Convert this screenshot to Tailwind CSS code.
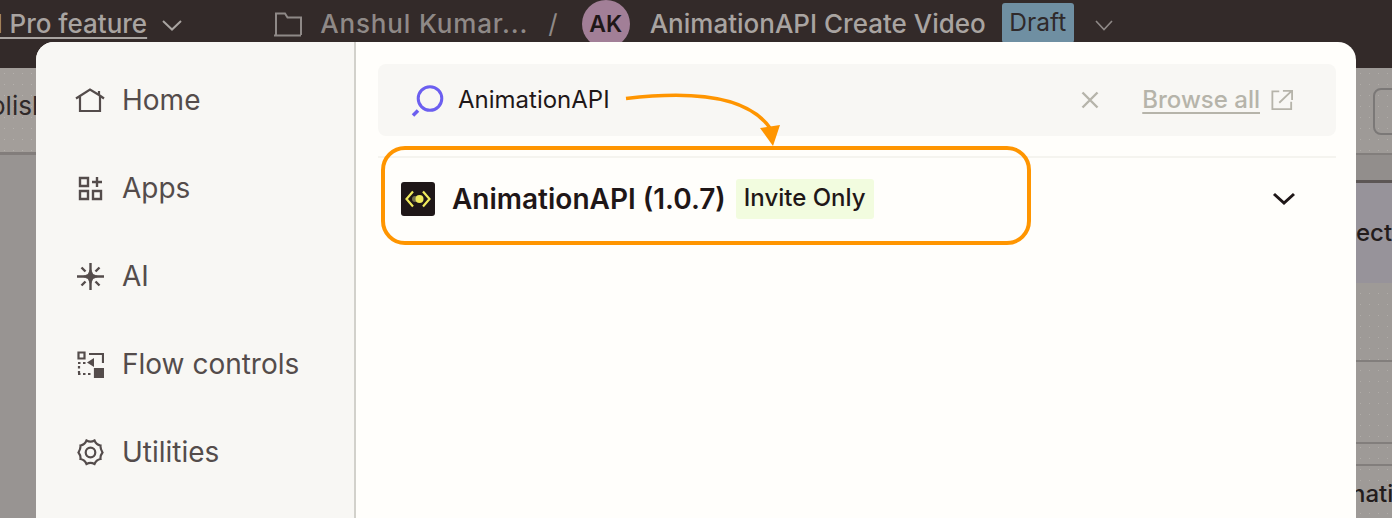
<!DOCTYPE html>
<html><head><meta charset="utf-8">
<script src="https://cdn.jsdelivr.net/npm/@tailwindcss/browser@4"></script>
</head>
<body class="m-0 overflow-hidden">
<div class="relative w-[1392px] h-[518px] overflow-hidden font-['Inter',sans-serif] bg-[#9d9996]">
  <!-- top bar -->
  <header class="h-[68px] bg-[#332a29] flex items-start text-[26px] leading-[48px] font-medium text-[#8f8987] whitespace-nowrap">
    <span class="ml-[-4px] text-[#a9a4a1] underline decoration-2 underline-offset-[4px]">l Pro feature</span>
    <svg class="ml-[14px] mt-[19px]" width="22" height="13" viewBox="0 0 22 13" fill="none" stroke="#a9a4a1" stroke-width="2"><path d="M2 2l9 8.500 9-8.500"/></svg>
    <svg class="ml-[91px] mt-[12px]" width="28" height="25" viewBox="0 0 28 25" fill="none" stroke="#8f8987" stroke-width="2"><path d="M2 24V1.500h9l2.500 4H27V23M0 23.500h27"/></svg>
    <span class="ml-[18px] tracking-[0.85px]">Anshul Kumar...</span>
    <span class="ml-[20px] font-normal">/</span>
    <span class="ml-[24px] w-[48px] h-[48px] rounded-full bg-[#a27f97] text-[#1f1718] text-[23px] font-semibold text-center">AK</span>
    <span class="ml-[20px] text-[#a9a4a1]">AnimationAPI Create Video</span>
    <span class="ml-[16px] mt-[3px] h-[40px] w-[72px] text-center bg-[#6f8fa2] rounded-[3px] text-[#2f2a2b] text-[24.500px] leading-[38px] font-normal">Draft</span>
    <svg class="ml-[20px] mt-[19px]" width="20" height="13" viewBox="0 0 20 13" fill="none" stroke="#8f8987" stroke-width="1.6"><path d="M2 2l8 8.500 8-8.500"/></svg>
  </header>

  <!-- dimmed canvas -->
  <div class="absolute left-0 top-[68px] w-[36px] h-[450px] bg-[#989492] bg-[radial-gradient(#7f7b7a_0.7px,transparent_0.7px)] bg-[length:22px_22px]">
    <div class="h-[87px] bg-[#a39e9a] bg-[radial-gradient(#b5b1ad_0.7px,transparent_0.7px)] bg-[length:9px_11px] border-b-[3px] border-[#827d7b] text-[26px] text-[#2f2929] leading-[76px] overflow-hidden"><span class="ml-[-10px]">olish</span></div>
  </div>
  <div class="absolute left-[1356px] top-[68px] w-[36px] h-[450px] bg-[#9e9a97] bg-[radial-gradient(#b0aca8_0.7px,transparent_0.7px)] bg-[length:9px_11px] text-[24px] text-[#231c1c] font-medium overflow-hidden">
    <div class="h-[87px] border-b-[2px] border-[#827e7c] pt-[20px] pl-[17px]"><div class="w-[40px] h-[47px] border-2 border-[#7b7877] rounded-[8px]"></div></div>
    <div class="h-[28px] bg-[#928e8c] border-b-[3px] border-[#5c5655]"></div>
    <div class="h-[100px] bg-[#97939a] pt-[32px] leading-[36px] whitespace-nowrap"><span>ect</span></div>
    <div class="h-[79px] border-b-[2px] border-[#827e7c]"></div>
    <div class="h-[82px] border-b-[2px] border-[#827e7c]"></div>
    <div class="h-[22px] border-b-[2px] border-[#827e7c]"></div>
    <div class="pt-[10px] leading-[36px] whitespace-nowrap"><span class="ml-[-5px]">nati</span></div>
  </div>

  <!-- modal -->
  <div class="absolute left-[36px] top-[42px] w-[1320px] h-[476px] rounded-t-[18px] overflow-hidden bg-[#fffefb] flex">
    <aside class="w-[318px] h-full bg-[#f8f7f4] pt-[40px] pl-[39px] flex flex-col gap-[52px] text-[#544c4b] text-[28px] leading-[36px]">
      <div class="flex items-center h-[36px] gap-[17px]">
        <span class="w-[30px] flex justify-center"><svg width="30" height="24" viewBox="0 0 30 24" fill="none" stroke="#544c4b" stroke-width="2.200"><path d="M1 10.500L15 1.500l9 5.500M24 3v4.500M29 10.500L24 7M5 8v15h20V8"/></svg></span>
        <span>Home</span>
      </div>
      <div class="flex items-center h-[36px] gap-[17px]">
        <span class="w-[30px] flex justify-center"><svg width="25" height="25" viewBox="0 0 25 25" fill="none" stroke="#544c4b" stroke-width="2.400"><path d="M2 2h8v8H2zM2 15h8v8H2zM15 15h8v8h-8zM19 1v10M14 6h10"/></svg></span>
        <span>Apps</span>
      </div>
      <div class="flex items-center h-[36px] gap-[17px]">
        <span class="w-[30px] flex justify-center"><svg width="27" height="27" viewBox="0 0 27 27" fill="none" stroke="#544c4b" stroke-width="2.400"><path d="M13.500 0v8M13.500 19v8M0 13.500h8M19 13.500h8M4.500 4.500l4 4M18.500 18.500l4 4M22.500 4.500l-4 4M8.500 18.500l-4 4"/><path d="M13.500 5l2.600 5.900 5.900 2.600-5.900 2.600-2.600 5.900-2.600-5.900-5.900-2.600 5.900-2.600z" fill="#544c4b" stroke="none"/></svg></span>
        <span>AI</span>
      </div>
      <div class="flex items-center h-[36px] gap-[17px]">
        <span class="w-[30px] flex justify-center"><svg width="27" height="27" viewBox="0 0 27 27" fill="none" stroke="#544c4b" stroke-width="2.200"><path d="M1.500 1.500h6v6h-6z"/><path d="M12 3h14v9"/><path d="M10 11.500l7-4.500v9z" fill="#544c4b" stroke="none"/><path d="M1 12h8M2 15v7M1 23h15" stroke-dasharray="2.500 2.500"/><path d="M18 18h8v8h-8z" fill="#544c4b"/></svg></span>
        <span>Flow controls</span>
      </div>
      <div class="flex items-center h-[36px] gap-[17px]">
        <span class="w-[30px] flex justify-center"><svg width="27" height="27" viewBox="0 0 27 27" fill="none" stroke="#544c4b" stroke-width="2.200"><circle cx="13.500" cy="13.500" r="4.800"/><path d="M9.500 1.500c2.500 1.500 5.500 1.500 8 0 1 2.500 3 4.500 6 5 -.3 2.500.5 4.500 2 7 -1.500 2-2.300 4-2 6.500-3 .5-5 2.500-6 5-2.500-1.500-5.500-1.500-8 0-1-2.500-3-4.500-6-5 .3-2.500-.5-4.500-2-6.500 1.500-2.500 2.300-4.500 2-7 3-.5 5-2.500 6-5z"/></svg></span>
        <span>Utilities</span>
      </div>
    </aside>
    <div class="w-[2px] bg-[#d2d1cb]"></div>
    <main class="flex-1 relative pl-[22px] pr-[20px] pt-[22px]">
      <div class="h-[72px] w-[958px] rounded-[8px] bg-[#f8f7f4] flex items-center relative">
        <svg class="ml-[33px]" width="34" height="34" viewBox="0 0 34 34" fill="none"><circle cx="19" cy="15.500" r="11.800" stroke="#6c5ff0" stroke-width="3"/><path d="M2 32.500l5-5" stroke="#6c5ff0" stroke-width="3.500"/></svg>
        <span class="ml-[13px] text-[24px] text-[#1f1718] leading-[30px]">AnimationAPI</span>
        <div class="ml-auto flex items-center">
          <svg width="18" height="18" viewBox="0 0 18 18" fill="none" stroke="#b6b4aa" stroke-width="2.400"><path d="M1.500 1.500l15 15M16.500 1.500l-15 15"/></svg>
          <span class="ml-[43px] text-[24px] font-medium text-[#b6b4aa] underline decoration-2 underline-offset-[4px]">Browse all</span>
          <svg class="ml-[11px] mr-[43px]" width="22" height="22" viewBox="0 0 24 24" fill="none" stroke="#b6b4aa" stroke-width="2"><path d="M9 2.500H1.500V22H22v-8M9 15L22 2.500M13 2h10v10"/></svg>
        </div>
      </div>
      <div class="h-[2px] w-[958px] mt-[20px] bg-[#f5f4ef]"></div>
      <div class="flex items-center h-[82px] pl-[23px]">
        <div class="w-[34px] h-[34px] rounded-[3px] bg-[#1f1718] flex items-center justify-center">
          <svg width="26" height="18" viewBox="0 0 26 18" fill="none"><path d="M8 1.500L1.500 9 8 16.500M18 1.500L24.500 9 18 16.500" stroke="#f0ea5c" stroke-width="2.200"/><circle cx="10" cy="9" r="3" fill="#77734a"/><circle cx="14.500" cy="9" r="4" fill="#f0ea5c"/></svg>
        </div>
        <span class="ml-[17px] text-[28px] font-semibold text-[#1f1718] leading-[34px]">AnimationAPI (1.0.7)</span>
        <span class="ml-[10px] mb-[1px] h-[40px] px-[8px] rounded-[3px] bg-[#f2fcdf] text-[24px] font-medium text-[#1f1718] leading-[38px]">Invite Only</span>
        <svg class="absolute left-[916px]" width="24" height="14" viewBox="0 0 24 14" fill="none" stroke="#1f1718" stroke-width="3"><path d="M2 2l10 9 10-9"/></svg>
      </div>
    </main>
  </div>

  <!-- annotation highlight -->
  <div class="absolute left-[381px] top-[146px] w-[650px] h-[99px] border-[4px] border-[#ff9500] rounded-[24px]"></div>
  <svg class="absolute left-0 top-0 pointer-events-none" width="1392" height="518" viewBox="0 0 1392 518" fill="none">
    <path d="M626 98.500C680 92 745 92 770 128" stroke="#ff9500" stroke-width="3.500"/>
    <path d="M760 128L780 125L773 146z" fill="#ff9500"/>
  </svg>
</div>
</body></html>
